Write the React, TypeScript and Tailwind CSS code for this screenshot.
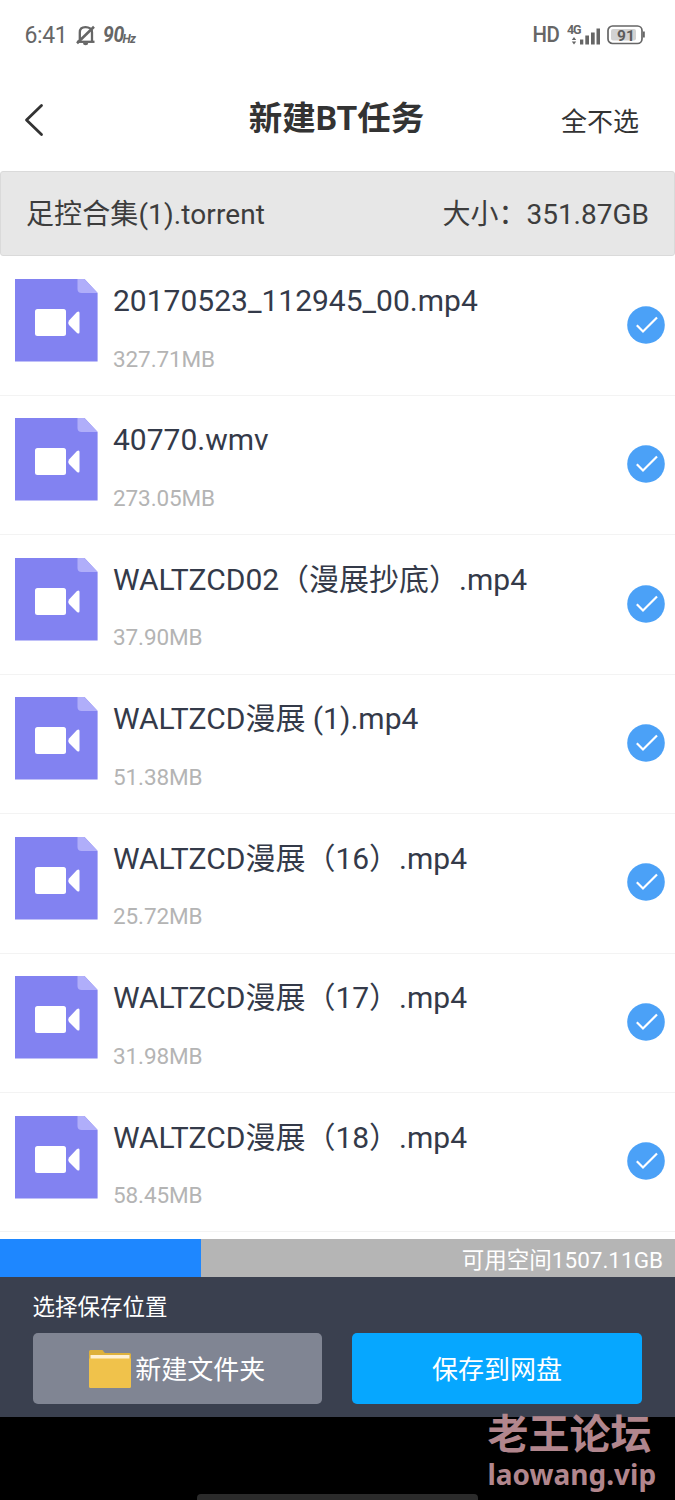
const files = [
  { name: '20170523_112945_00.mp4', size: '327.71MB' },
  { name: '40770.wmv', size: '273.05MB' },
  { name: 'WALTZCD02（漫展抄底）.mp4', size: '37.90MB' },
  { name: 'WALTZCD漫展 (1).mp4', size: '51.38MB' },
  { name: 'WALTZCD漫展（16）.mp4', size: '25.72MB' },
  { name: 'WALTZCD漫展（17）.mp4', size: '31.98MB' },
  { name: 'WALTZCD漫展（18）.mp4', size: '58.45MB' },
];

function MutedBell() {
  return (
    <svg className="ml-[9px] h-[21px] w-[20px]" viewBox="0 0 20 21" fill="none" stroke="#666" strokeWidth="2.300">
      <path d="M3.800 16V7.500C3.800 4 6 2.200 9.500 2.200S16 4 16 7.500V16" />
      <path d="M1 16.800h17.500" />
      <path d="M1 18.300L18 1.800" strokeWidth="2.600" />
      <path d="M7 18a2.600 2.200 0 0 0 5.200 0z" fill="#666" stroke="none" />
    </svg>
  );
}

function Signal() {
  return (
    <svg className="ml-[7px] h-[22px] w-[34px]" viewBox="0 0 34 22" fill="#666">
      <text x="0" y="9.500" fontSize="12.500" fontWeight="700" fontFamily="Roboto, sans-serif" textLength="14.500">4G</text>
      <path d="M4.800 16L7 13l2.200 3zM4.800 17.500L7 20.500l2.200-3z" />
      <path d="M13 15.500h3.300v5H13zM18.300 11.500h3.700v9h-3.700zM24 8.500h3.700v12H24zM29.500 4.500H33v16h-3.500z" />
    </svg>
  );
}

function Battery() {
  return (
    <svg className="ml-[6px] h-[20px] w-[39px]" viewBox="0 0 39 20">
      <rect x="1" y="1" width="34" height="17.500" rx="4.500" fill="none" stroke="#666" strokeWidth="1.700" />
      <path d="M36 6.500h1.800v6H36z" fill="#666" />
      <rect x="4" y="4" width="25" height="11.500" rx="2" fill="#d2d2d2" />
      <text x="10" y="15.500" fontSize="15.500" fontWeight="700" fill="#5c5c5c" fontFamily="Roboto, sans-serif">91</text>
    </svg>
  );
}

function VideoIcon() {
  return (
    <svg className="mt-[22.500px] ml-[15px] h-[83px] w-[83px] shrink-0" viewBox="0 0 83 83">
      <path d="M0 0h69.500L82.600 14v68.500H0z" fill="#8282f1" />
      <path d="M62.500 0h7L82.600 14H66.500q-4 0-4-4z" fill="#b0aefa" />
      <rect x="20" y="30" width="31" height="27" rx="2.500" fill="#fff" />
      <path d="M54 41.500L62 33q2.500-1.500 2.500 1v19q0 2.500-2.500 1L54 46q-1.500-2.200 0-4.500z" fill="#fff" />
    </svg>
  );
}

function Check() {
  return (
    <svg className="mt-[49.200px] mr-[10px] h-[38px] w-[38px] shrink-0" viewBox="0 0 38 38">
      <circle cx="19" cy="19" r="18.800" fill="#4ba1f7" />
      <path d="M9.800 19.200l6.200 6.300L30 11.500" fill="none" stroke="#fff" strokeWidth="2.200" />
    </svg>
  );
}

function Folder() {
  return (
    <svg className="mt-px h-[38px] w-[42px]" viewBox="0 0 42 38">
      <path d="M0 1.500Q0 0 1.500 0H13q1.500 0 1.500 1.500L16 3h24.500Q42 3 42 4.500V12H0z" fill="#deb13c" />
      <path d="M1.500 5h39v6h-39z" fill="#fff0d2" />
      <path d="M0 8.500h42v28q0 1.500-1.500 1.500h-39Q0 38 0 36.500z" fill="#f0c24b" />
    </svg>
  );
}

export default function App() {
  return (
    <div className="flex h-[1500px] w-[675px] flex-col overflow-hidden bg-white font-['Roboto','Noto_Sans_CJK_SC',sans-serif]">
      <div className="flex h-[70px] shrink-0 items-center pr-[29px] pl-[24.500px] text-[#666]">
        <span className="mt-[3px] w-[42px] text-[23px] tracking-[-0.4px]">6:41</span>
        <MutedBell />
        <span className="ml-[7px] w-[20px] origin-left scale-x-90 text-[21.500px] font-bold italic tracking-[-0.3px]">90</span>
        <span className="mt-[7px] text-[12px] font-bold italic tracking-[-0.700px]">Hz</span>
        <span className="mr-px ml-auto origin-right scale-x-95 pt-px text-[21.500px] font-medium tracking-[-0.500px]">HD</span>
        <Signal />
        <Battery />
      </div>

      <header className="grid h-[100.500px] shrink-0 grid-cols-3 items-center">
        <svg className="ml-[24px] h-[34px] w-[22px]" viewBox="0 0 22 34" fill="none" stroke="#333" strokeWidth="2.800" strokeLinecap="round" strokeLinejoin="round">
          <path d="M17.500 2.500L2.500 17l15 14.500" />
        </svg>
        <h1 className="pr-[2px] pb-[2px] text-center text-[33.500px] font-bold whitespace-nowrap text-[#333]">新建BT任务</h1>
        <button className="pt-[4px] pr-[36px] text-right text-[26px] text-[#333]">全不选</button>
      </header>

      <div className="flex h-[85px] shrink-0 items-center justify-between rounded-[3px] border border-[#dadada] bg-[#e7e7e7] px-[25px] pt-[4px] text-[28px] text-[#3d3d3d]">
        <span className="tracking-[0.1px]">足控合集(1).torrent</span>
        <span>大小：351.87GB</span>
      </div>

      <ul className="shrink-0 pt-px">
        {files.map((f) => (
          <li key={f.name} className="flex h-[139.430px] border-b border-[#f3f3f3]">
            <VideoIcon />
            <div className="ml-[15px] flex flex-1 flex-col pt-[24.500px]">
              <span className="h-[40px] text-[30px] leading-[40px] whitespace-nowrap text-[#343a49]">{f.name}</span>
              <span className="mt-[22.500px] h-[30px] text-[22.500px] leading-[30px] tracking-[-0.1px] text-[#b4b4b4]">{f.size}</span>
            </div>
            <Check />
          </li>
        ))}
      </ul>

      <div className="mt-[6.500px] flex h-[38px] shrink-0 bg-[#b5b5b5]">
        <div className="w-[201px] bg-[#1e87ff]" />
        <span className="ml-auto pt-[2px] pr-[12px] text-[22.500px] leading-[38px] text-white">可用空间1507.11GB</span>
      </div>

      <div className="h-[140px] shrink-0 bg-[#3a404f] px-[32.500px] pt-[14px] text-white">
        <p className="h-[32px] text-[22.500px] leading-[32px]">选择保存位置</p>
        <div className="mt-[9.800px] grid w-[609.500px] grid-cols-2 gap-[30px] text-[26px]">
          <button className="flex h-[71.500px] items-center justify-center gap-[4px] rounded-[5px] bg-[#808593]">
            <Folder />
            <span className="pt-[3px]">新建文件夹</span>
          </button>
          <button className="h-[71.500px] rounded-[5px] bg-[#06a7ff] pt-[4px]">保存到网盘</button>
        </div>
      </div>

      <div className="relative flex flex-1 items-end bg-black">
        <div className="ml-[197px] h-[6px] w-[281px] rounded-t-[4px] bg-[#2b2b2b]" />
        <div className="absolute top-[-2px] left-[487.500px] flex flex-col whitespace-nowrap text-[#b1868d]">
          <span className="h-[41px] text-[41px] leading-[41px] font-bold">老王论坛</span>
          <span className="h-[36px] font-['Noto_Sans',sans-serif] text-[28px] leading-[36px] font-bold">laowang.vip</span>
        </div>
      </div>
    </div>
  );
}
